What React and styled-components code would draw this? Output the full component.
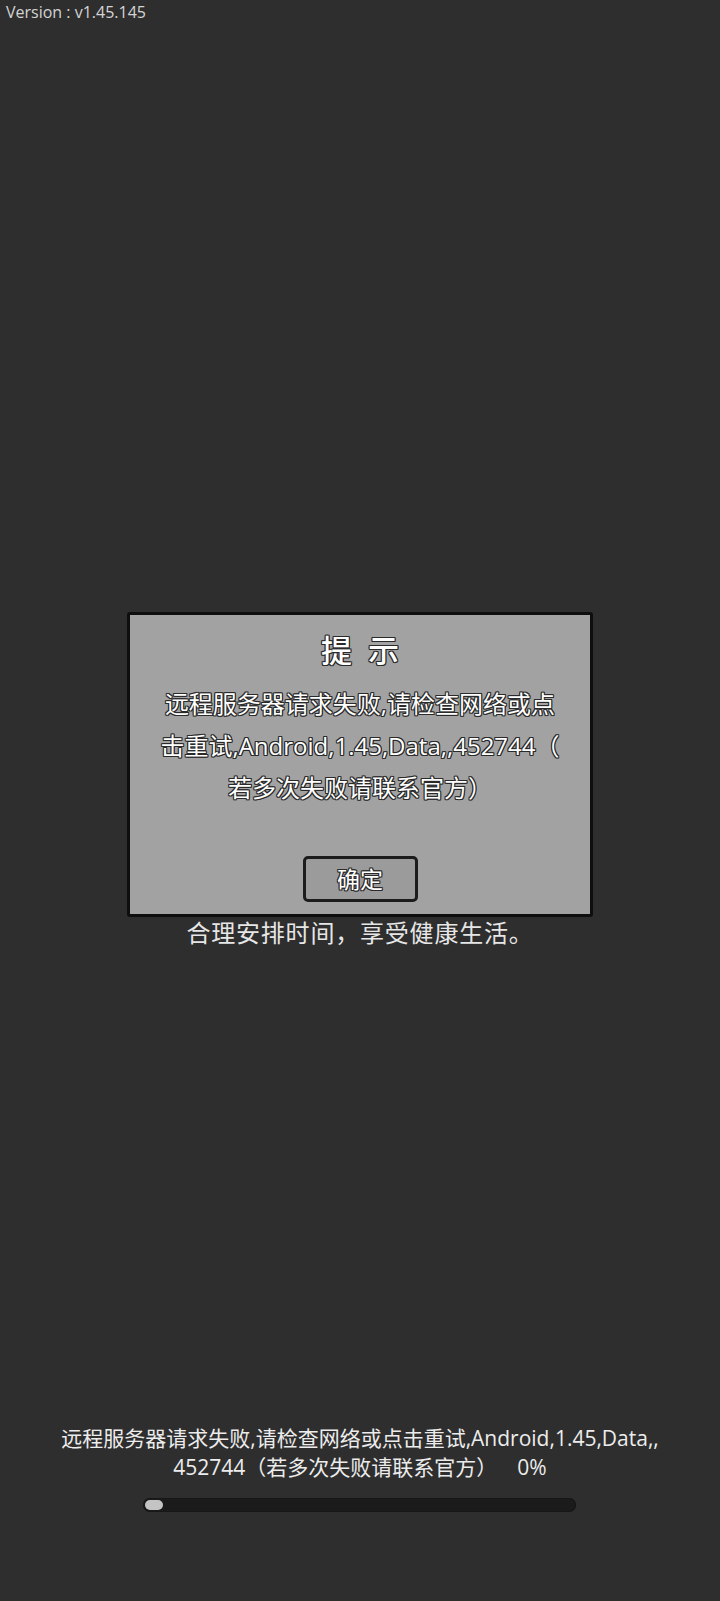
import React from "react";
import styled, { createGlobalStyle } from "styled-components";

const GlobalStyle = createGlobalStyle`
  html, body {
    margin: 0;
    padding: 0;
    background: #2e2e2e;
  }
  body {
    font-family: "Open Sans", "Noto Sans CJK SC", "Noto Sans", sans-serif;
  }
`;

const Screen = styled.div`
  position: relative;
  min-height: 1601px;
  display: flex;
  flex-direction: column;
  align-items: center;
  background: #2e2e2e;
  overflow: hidden;
`;

const Version = styled.div`
  align-self: flex-start;
  padding-left: 6px;
  font-size: 16px;
  line-height: 24px;
  color: #d4d4d4;
`;

const Advice = styled.div`
  margin-top: 891px;
  font-size: 24px;
  line-height: 36px;
  color: #e6e6e6;
  letter-spacing: 0.8px;
`;

const Footer = styled.div`
  margin-top: auto;
  padding-bottom: 89px;
  display: flex;
  flex-direction: column;
  align-items: center;
`;

const Status = styled.div`
  font-size: 21px;
  line-height: 29px;
  color: #ececec;
  text-align: center;
  white-space: nowrap;
`;

const Percent = styled.span`
  margin-left: 20px;
`;

const Track = styled.div`
  margin-top: 16px;
  width: 433px;
  height: 14px;
  border-radius: 7px;
  background: #1b1b1b;
  box-shadow: inset 0 0 0 1px #171717;
  padding: 2px 2px;
  box-sizing: border-box;
  display: flex;
`;

const Fill = styled.div`
  height: 100%;
  border-radius: 5px;
  background: #c4c4c4;
`;

const Dialog = styled.div`
  position: absolute;
  top: 612px;
  left: 50%;
  transform: translateX(-50%);
  width: 466px;
  height: 305px;
  box-sizing: border-box;
  border: 3px solid #0e0e0e;
  border-radius: 3px;
  background: #a2a2a2;
  padding: 15px 10px 12px;
  display: flex;
  flex-direction: column;
  align-items: center;
`;

const outline = `
  text-shadow: -1px -1px 0 #2a2a2a, 1px -1px 0 #2a2a2a, -1px 1px 0 #2a2a2a,
    1px 1px 0 #2a2a2a, 0 1px 0 #2a2a2a, 0 -1px 0 #2a2a2a, 1px 0 0 #2a2a2a,
    -1px 0 0 #2a2a2a;
`;

const Title = styled.div`
  font-size: 31px;
  line-height: 40px;
  font-weight: 500;
  color: #ffffff;
  letter-spacing: 4px;
  padding-left: 4px;
  ${outline}
`;

const Message = styled.div`
  margin-top: 13px;
  font-size: 24px;
  line-height: 42px;
  color: #ffffff;
  text-align: center;
  white-space: nowrap;
  ${outline}
`;

const Line = styled.div``;

const Button = styled.button`
  margin-top: auto;
  width: 115px;
  height: 46px;
  box-sizing: border-box;
  border: 3px solid #1c1c1c;
  border-radius: 5px;
  background: #9b9b9b;
  font-family: inherit;
  font-size: 23px;
  line-height: 1;
  color: #ffffff;
  padding: 0;
  ${outline}
`;

export default function App() {
  const progress = 0;
  return (
    <>
      <GlobalStyle />
      <Screen>
        <Version>Version : v1.45.145</Version>
        <Advice>合理安排时间，享受健康生活。</Advice>
        <Footer>
          <Status>
            <div>远程服务器请求失败,请检查网络或点击重试,Android,1.45,Data,,</div>
            <div>
              452744（若多次失败请联系官方）<Percent>{progress}%</Percent>
            </div>
          </Status>
          <Track>
            <Fill style={{ width: `${Math.max(progress, 4)}%` }} />
          </Track>
        </Footer>
        <Dialog>
          <Title>提 示</Title>
          <Message>
            <Line>远程服务器请求失败,请检查网络或点</Line>
            <Line>击重试,Android,1.45,Data,,452744（</Line>
            <Line>若多次失败请联系官方）</Line>
          </Message>
          <Button>确定</Button>
        </Dialog>
      </Screen>
    </>
  );
}
